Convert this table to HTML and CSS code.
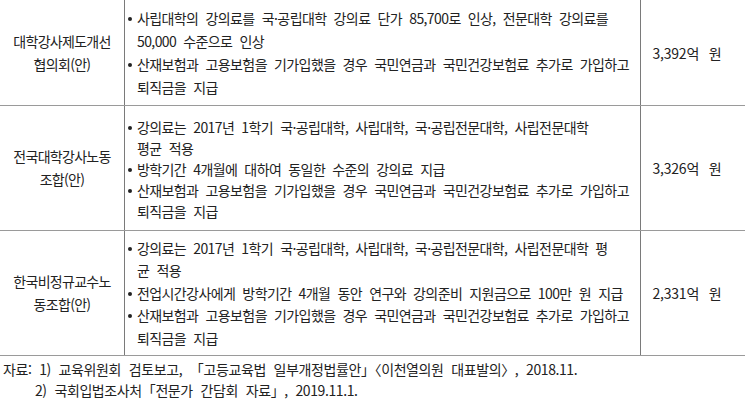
FILE: index.html
```html
<!DOCTYPE html>
<html lang="ko">
<head>
<meta charset="utf-8">
<link rel="stylesheet" href="styles.css">
</head>
<body>
<div class="table">
  <div class="row row-1">
    <div class="cell name">대학강사제도개선<br>협의회(안)</div>
    <div class="cell content">
      <div class="item"><span class="dot"></span><div class="txt">사립대학의 강의료를 국·공립대학 강의료 단가 85,700로 인상, 전문대학 강의료를<br>50,000 수준으로 인상</div></div>
      <div class="item"><span class="dot"></span><div class="txt">산재보험과 고용보험을 기가입했을 경우 국민연금과 국민건강보험료 추가로 가입하고<br>퇴직금을 지급</div></div>
    </div>
    <div class="cell cost">3,392억 원</div>
  </div>
  <div class="row row-2">
    <div class="cell name">전국대학강사노동<br>조합(안)</div>
    <div class="cell content">
      <div class="item"><span class="dot"></span><div class="txt">강의료는 2017년 1학기 국·공립대학, 사립대학, 국·공립전문대학, 사립전문대학<br>평균 적용</div></div>
      <div class="item"><span class="dot"></span><div class="txt">방학기간 4개월에 대하여 동일한 수준의 강의료 지급</div></div>
      <div class="item"><span class="dot"></span><div class="txt">산재보험과 고용보험을 기가입했을 경우 국민연금과 국민건강보험료 추가로 가입하고<br>퇴직금을 지급</div></div>
    </div>
    <div class="cell cost">3,326억 원</div>
  </div>
  <div class="row row-3">
    <div class="cell name">한국비정규교수노<br>동조합(안)</div>
    <div class="cell content">
      <div class="item"><span class="dot"></span><div class="txt">강의료는 2017년 1학기 국·공립대학, 사립대학, 국·공립전문대학, 사립전문대학 평<br>균 적용</div></div>
      <div class="item"><span class="dot"></span><div class="txt">전업시간강사에게 방학기간 4개월 동안 연구와 강의준비 지원금으로 100만 원 지급</div></div>
      <div class="item"><span class="dot"></span><div class="txt">산재보험과 고용보험을 기가입했을 경우 국민연금과 국민건강보험료 추가로 가입하고<br>퇴직금을 지급</div></div>
    </div>
    <div class="cell cost">2,331억 원</div>
  </div>
</div>
<div class="source">
  <div class="src-line">자료: 1) 교육위원회 검토보고, 「고등교육법 일부개정법률안」〈이천열의원 대표발의〉, 2018.11.</div>
  <div class="src-line indent">2) 국회입법조사처「전문가 간담회 자료」, 2019.11.1.</div>
</div>
</body>
</html>
```

FILE: styles.css
```css
* { box-sizing: border-box; }
html, body {
  margin: 0;
  padding: 0;
  background: #ffffff;
}
body {
  width: 745px;
  height: 402px;
  overflow: hidden;
  font-family: "Noto Sans CJK KR", "Noto Sans", sans-serif;
  font-size: 14px;
  color: #222222;
}
.table {
  display: flex;
  flex-direction: column;
}
.row {
  display: grid;
  grid-template-columns: 125px 516px 1fr;
  border-bottom: 1px solid #9a9a9a;
}
.row-1 { height: 106px; }
.row-2 { height: 125px; }
.row-3 { height: 125px; }
.cell {
  display: flex;
  flex-direction: column;
  justify-content: center;
}
.name {
  align-items: center;
  text-align: center;
  line-height: 23px;
  letter-spacing: -0.7px;
  border-right: 1px solid #7a7a7a;
}
.content {
  padding-left: 3px;
  line-height: 22.5px;
  letter-spacing: -0.6px;
  word-spacing: 3.8px;
  white-space: nowrap;
  border-right: 1px solid #7a7a7a;
}
.row-1 .content { line-height: 23px; }
.row-2 .content { line-height: 21px; padding-top: 2px; }
.item {
  display: flex;
  align-items: flex-start;
}
.dot {
  flex: none;
  width: 4px;
  height: 4px;
  border-radius: 50%;
  background: #222222;
  margin-top: 10px;
  margin-right: 5px;
}
.row-2 .dot { margin-top: 9px; }
.cost {
  align-items: center;
  padding-right: 12px;
  letter-spacing: -0.2px;
  word-spacing: 6px;
}
.source {
  padding-left: 3px;
  line-height: 21px;
  padding-top: 3px;
  word-spacing: 4.2px;
  letter-spacing: -0.4px;
  white-space: nowrap;
}
.indent { padding-left: 32px; }
```
